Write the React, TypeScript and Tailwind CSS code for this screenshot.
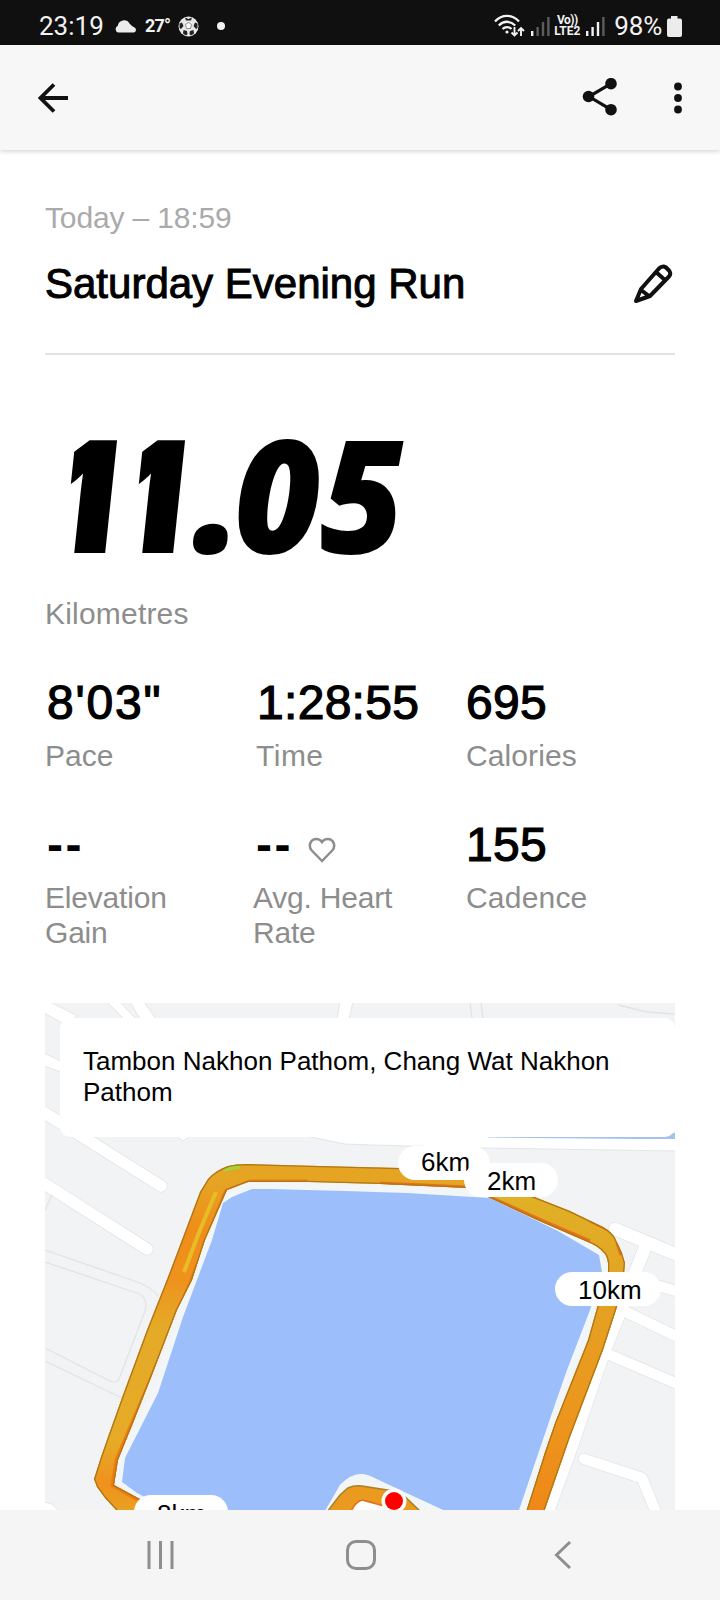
import type { ReactNode } from "react";

const sans = "font-['Liberation_Sans',Arial,sans-serif]";

const stats = [
  { label: "Pace", value: "8'03\"", valueClass: "pl-[2px] tracking-[1.8px]", labelClass: "" },
  { label: "Time", value: "1:28:55", valueClass: "pl-[2px] tracking-[0.3px]", labelClass: "pl-px tracking-[0.5px]" },
  { label: "Calories", value: "695", valueClass: "pl-px tracking-[0.3px]", labelClass: "pl-px tracking-[0.1px]" },
  { label: "Elevation Gain", value: "--", valueClass: "pl-[2px] font-bold tracking-[2.5px]", labelClass: "tracking-[-0.2px]" },
  { label: "Avg. Heart Rate", value: "--", heart: true, valueClass: "pl-px font-bold tracking-[2.5px]", labelClass: "-ml-[2px] tracking-[-0.2px]" },
  { label: "Cadence", value: "155", valueClass: "pl-px tracking-[0.3px]", labelClass: "pl-px tracking-[0.2px]" },
];

// outline of the recorded loop, outer edge first and then back along the inner one
const loop =
  "M118 1512 L105 1498 L97 1487 L94 1479 L101 1457 L108 1437 L123 1395 L147 1330 L168 1277 L182 1240 L200 1192 L208 1179 Q216 1170 228 1166 Q236 1164 247 1164 L320 1166 L400 1168 L470 1172 L537 1198 L570 1211 L603 1227 Q612 1232 615 1238 L622 1253 L625 1263 L624 1274 L617 1307 L603 1350 L570 1437 L544 1512 L526 1512 L545 1452 L555 1423 L588 1340 L597 1308 L608 1273 L608 1263 Q607 1255 603 1252 Q599 1247 590 1243 L537 1220 L488 1197 L467 1188 L380 1184 L308 1182 L248 1182 L227 1190 L205 1240 L192 1280 L177 1310 L152 1375 L133 1423 L118 1460 L114 1485 L138 1498 L170 1512 Z";

function SignalBars({ on }: { on: number }) {
  return (
    <svg width="19" height="20" viewBox="0 0 19 20">
      {[5, 9, 14, 19].map((h, i) => (
        <rect key={h} x={i * 5.4} y={20 - h} width="2.4" height={h} fill={i < on ? "#f2f2f2" : "#5c5c5c"} />
      ))}
    </svg>
  );
}

function StatusBar() {
  return (
    <div className="flex h-[45px] items-center bg-[#101010] pt-[7px] pr-[38px] pl-[39px] font-[Roboto,sans-serif] text-[#f2f2f2]">
      <span className="w-[76px] text-[26px] leading-none">23:19</span>
      <svg width="22" height="14" viewBox="0 0 22 14" fill="#ececec">
        <path d="M3.500 13.500A3.500 3.500 0 0 1 2.800 6.800 6.300 6.300 0 0 1 14.500 4.500Q16.500 7 19.500 8.500A2.700 2.700 0 0 1 19 13.500z" />
      </svg>
      <span className="ml-2 w-[33px] text-[18px] leading-none font-bold tracking-[-0.8px]">27°</span>
      <svg width="21" height="21" viewBox="0 0 21 21">
        <circle cx="10.500" cy="10.500" r="10" fill="#e9e9e9" />
        <path d="M7 1.500l3.500 1.500 3.500-1.500-1 3h-5zM1.500 7.500l2.500-1 1.500 3.500-2.500 3-1.500-1zM19.500 7.500l-2.500-1-1.500 3.500 2.500 3 1.500-1zM5 17.500l.5-3.500 3.500 1 .5 3-1.500 1.500zM16 17.500l-.5-3.500-3.500 1-.5 3 1.500 1.500z" fill="#222" />
        <path d="M7.500 8.500l3-2 3 2-1 4h-4z" fill="#fff" stroke="#777" strokeWidth="0.800" />
      </svg>
      <span className="ml-[18px] size-2 rounded-full bg-[#f2f2f2]" />
      <div className="ml-auto flex items-center">
        <svg width="31" height="24" viewBox="0 0 31 24" fill="none" stroke="#f2f2f2" strokeWidth="2.300">
          <path d="M1 7.500C8 0 18 0 25 7.500M4.800 11.500c5-5 11.400-5 16.400 0M8.500 15c2.500-2.600 6.500-2.600 9 0" />
          <circle cx="13" cy="18" r="1.600" fill="#f2f2f2" stroke="none" />
          <path d="M20.500 13v8M17.500 18.500l3 3 3-3M27 22v-8M24 17l3-3 3 3" strokeWidth="1.900" />
        </svg>
        <span className="ml-[6px] flex">
          <SignalBars on={1} />
        </span>
        <span className="mr-[5px] ml-[3px] w-7 text-center text-[12px] leading-[11px] font-bold">
          <span className="block tracking-[-0.5px]">Vo))</span>
          <span className="block">LTE2</span>
        </span>
        <SignalBars on={3} />
        <span className="ml-[9px] text-[26px] leading-none tracking-[-0.2px]">98%</span>
        <svg className="ml-[5px]" width="15" height="21" viewBox="0 0 15 21" fill="#ececec">
          <path d="M4 0h6.500v2.500H13a2 2 0 0 1 2 2V19a2 2 0 0 1-2 2H2a2 2 0 0 1-2-2V4.500a2 2 0 0 1 2-2h2z" />
        </svg>
      </div>
    </div>
  );
}

function Header() {
  return (
    <header className="flex h-[105px] items-center justify-between bg-[#f7f7f7] pr-[38px] pl-[38px] shadow-[0_1px_5px_rgba(0,0,0,0.2)]">
      <svg width="32" height="32" viewBox="0 0 32 32" fill="none" stroke="#111" strokeWidth="3.800">
        <path d="M30 16H3M16 2.500L2.500 16 16 29.500" />
      </svg>
      <div className="flex items-center gap-[56px]">
        <svg width="36" height="40" viewBox="0 1.3 36 40" fill="#111">
          <path d="M29 7L7 19.800 29 33" fill="none" stroke="#111" strokeWidth="3.200" />
          <circle cx="29" cy="7" r="5.800" />
          <circle cx="6.500" cy="19.800" r="5.800" />
          <circle cx="29" cy="33" r="5.800" />
        </svg>
        <svg width="8" height="32" viewBox="0 0 8 32" fill="#111">
          <circle cx="4" cy="4.500" r="3.900" />
          <circle cx="4" cy="16" r="3.900" />
          <circle cx="4" cy="27.500" r="3.900" />
        </svg>
      </div>
    </header>
  );
}

function Distance() {
  // the ones get a short flag, the other digits use the real italics
  return (
    <p className="mt-[57px] -ml-[6px] flex font-['Open_Sans',sans-serif] text-[158px] leading-[160px] font-extrabold text-black">
      <span className="w-[68px] -skew-x-6 [clip-path:inset(0_-20px_0_31px)]">1</span>
      <span className="w-[86px] -skew-x-6 [clip-path:inset(0_-20px_0_31px)]">1</span>
      <span className="w-[41px] origin-[0_141px] scale-[1.06] italic">.</span>
      <span className="w-[86px] origin-left scale-x-95 italic">0</span>
      <span className="w-[84px] origin-left scale-x-[0.92] italic">5</span>
    </p>
  );
}

function Pill({ className, children }: { className: string; children: ReactNode }) {
  return (
    <div className={`absolute h-[34px] rounded-full bg-white pl-[23px] text-[26px] leading-[31px] text-black ${className}`}>
      {children}
    </div>
  );
}

function RouteMap() {
  return (
    <section className="relative mt-[53px] h-[507px] overflow-hidden bg-[#f1f3f4]">
      <svg className="block" width="630" height="507" viewBox="45 1003 630 507">
        <defs>
          <linearGradient id="left" gradientUnits="userSpaceOnUse" x1="0" y1="1180" x2="0" y2="1510">
            <stop offset="0" stopColor="#e5a525" />
            <stop offset="0.15" stopColor="#f08d19" />
            <stop offset="0.3" stopColor="#ef921d" />
            <stop offset="0.45" stopColor="#e4ab28" />
            <stop offset="0.8" stopColor="#e6aa26" />
            <stop offset="0.92" stopColor="#ef911d" />
            <stop offset="1" stopColor="#e9a21f" />
          </linearGradient>
          <linearGradient id="right" gradientUnits="userSpaceOnUse" x1="0" y1="1200" x2="0" y2="1510">
            <stop offset="0" stopColor="#e0b026" />
            <stop offset="0.35" stopColor="#e5a022" />
            <stop offset="0.7" stopColor="#ec961d" />
            <stop offset="1" stopColor="#ef8818" />
          </linearGradient>
          <clipPath id="loop">
            <path d={loop} />
          </clipPath>
        </defs>

        {/* streets */}
        <g fill="#fff" stroke="#e3e5e6" strokeWidth="1">
          <path d="M44 999L78 1016 64 1024 44 1013z" />
          <path d="M107 1002h13l16 17h-12zM130 1002h14l12 17h-16z" />
          <path d="M340 1002h13l-4 17h-12z" />
          <path d="M44 1053l17 8v11l-17-6z" />
          <path d="M176 1136l7 5 7-5z" />
          <path d="M306 1136l39 8 28 1 112 3 191 3v-16z" />
          <path d="M44 1502l8 2 8 8H44z" />
        </g>
        <path d="M488 1136.500H660L664 1133H676V1139H640L488 1137.500z" fill="#a3c2f0" />
        {[
          ["#e3e5e6", 0],
          ["#ffffff", 1.5],
        ].map(([color, inset]) => (
          <g key={color} fill="none" stroke={color as string} strokeLinecap="round" strokeLinejoin="round">
            <path d="M40 1110L83 1137 161 1186M40 1181L147 1249" strokeWidth={13 - Number(inset)} />
            <path d="M615 1229L680 1256M644 1250L620 1312 604 1352 571 1448 546 1516" strokeWidth={14 - Number(inset)} />
            <path d="M655 1285L680 1292M624 1311L680 1338M610 1355L680 1385M584 1459L642 1478 657 1515" strokeWidth={12 - Number(inset)} />
          </g>
        ))}
        <g fill="none" stroke="#e1e4e5" strokeWidth="1.300">
          <path d="M470 1003L472 1018M481 1003L483 1018M618 1005L647 1012 675 1014M52 1195L45 1210" />
          <path d="M45 1250L140 1283Q152 1288 158 1296M45 1262L137 1293Q149 1298 145 1311L119 1379Q116 1384 110 1381L45 1348M45 1361L122 1398" />
        </g>

        {/* lake and the path around it */}
        <path
          d="M252 1189L270 1189 345 1191 407 1193 490 1198 558 1231 599 1255 602 1272 590 1310 567 1370 552 1413 517 1516 456 1516 370 1476Q355 1470 340 1485L322 1516H180L137 1493 122 1482 125 1458 158 1393 183 1317 212 1240 223 1203 232 1197z"
          fill="#9cbffb"
          stroke="#f3f6f7"
          strokeWidth="13"
          paintOrder="stroke"
          strokeLinejoin="round"
        />
        <path d="M326 1512L340 1485Q356 1468 372 1477L445 1512z" fill="#f3f6f7" />

        {/* recorded run, tinted by speed */}
        <path d={loop} fill="#e5a523" />
        <g clipPath="url(#loop)" fill="none">
          <path d="M90 1520V1200L215 1165 240 1175 200 1300 130 1490 160 1520z" fill="url(#left)" />
          <path d="M480 1160L640 1200V1300L560 1520H500L600 1260 480 1210z" fill="url(#right)" />
          <path d="M138 1499L113 1485 117 1460 152 1378 192 1280 226 1192 250 1182 308 1182" stroke="#f07c12" strokeWidth="5" />
          <path d="M184 1272L200 1230 216 1192" stroke="#e8bc27" strokeWidth="4" />
          <path d="M224 1169L240 1166" stroke="#a6d13a" strokeWidth="5" />
          <path d="M380 1183L467 1187M488 1196L537 1218 590 1241M590 1221L608 1230M617 1243L621 1255" stroke="#e8701a" strokeWidth="3" />
          <path d={loop} stroke="#b07718" strokeWidth="2.600" />
        </g>
        <path d="M327 1512L340 1495 348 1488Q354 1485 362 1486L400 1492 421 1512H386Q372 1499 361 1501 355 1503 351 1512z" fill="#ea9a1e" stroke="#a98224" strokeWidth="1.500" />
        <path d="M351 1512Q355 1502 362 1500L384 1506 388 1512z" fill="#fff" stroke="#e8701a" strokeWidth="1.500" />
        <circle cx="394" cy="1501" r="12.500" fill="#fff" />
        <circle cx="394" cy="1501" r="9" fill="#f00" />
      </svg>

      <div className="absolute top-[15px] left-[15px] h-[119px] w-[615px] rounded-[10px] bg-white pt-[28px] pr-10 pl-[23px] text-[26px] leading-[31px] text-black">
        Tambon Nakhon Pathom, Chang Wat Nakhon Pathom
      </div>
      <Pill className="top-[143px] left-[353px] w-[92px] pt-px">6km</Pill>
      <Pill className="top-[160px] left-[419px] w-[94px] pt-[3px]">2km</Pill>
      <Pill className="top-[269px] left-[510px] w-[106px] pt-[3px]">10km</Pill>
      <Pill className="top-[492px] left-[89px] w-[94px] pt-[4px]">8km</Pill>
    </section>
  );
}

function NavBar() {
  return (
    <nav className="flex h-[90px] items-center justify-between bg-[#f5f5f5] pr-[147px] pl-[146px] text-[#8e8e8e]">
      <svg width="29" height="30" viewBox="0 0 29 30" fill="none" stroke="currentColor" strokeWidth="3">
        <path d="M3 1v28M14.500 1v28M26 1v28" />
      </svg>
      <svg className="mr-[7px]" width="32" height="32" viewBox="0 0 32 32" fill="none" stroke="currentColor" strokeWidth="3">
        <rect x="2.500" y="2.500" width="27" height="27" rx="8.500" />
      </svg>
      <svg width="20" height="30" viewBox="0 0 20 30" fill="none" stroke="currentColor" strokeWidth="3">
        <path d="M17 2L3.500 15 17 28" />
      </svg>
    </nav>
  );
}

export default function App() {
  return (
    <div className={`flex h-[1600px] w-[720px] flex-col overflow-hidden bg-white ${sans}`}>
      <StatusBar />
      <Header />
      <main className="h-[1360px] overflow-hidden px-[45px] pt-[50px]">
        <p className="text-[30px] leading-9 tracking-[-0.15px] text-[#aaa]">Today – 18:59</p>
        <div className="mt-6 flex items-center justify-between">
          <h1 className="text-[42px] leading-[48px] text-black [-webkit-text-stroke:1px_#000]">Saturday Evening Run</h1>
          <svg width="42" height="42" viewBox="0 2 42 42" fill="none" stroke="#111" strokeWidth="4" strokeLinejoin="round">
            <path d="M3 40L8 28 26 7.500Q29.500 4 33 6.500L36 9.500Q38.500 12.500 36 15.500L17 35zM23 11l10 9M8 29l8 6" />
          </svg>
        </div>
        <div className="mt-[45px] h-0.5 bg-[#e3e3e3]" />

        <Distance />
        <p className="mt-6 text-[30px] leading-9 tracking-[0.2px] text-[#8d8d8d]">Kilometres</p>

        <div className="mt-[43px] grid grid-cols-3 gap-y-[44px]">
          {stats.map((s) => (
            <div key={s.label}>
              <div className="flex h-[56px] items-center gap-[15px] text-black">
                <span
                  className={`text-[48px] leading-[56px] ${s.valueClass} ${
                    s.value === "--" ? "" : "[-webkit-text-stroke:1.2px_#000]"
                  }`}
                >
                  {s.value}
                </span>
                {s.heart && (
                  <svg className="mt-[10px]" width="28" height="26" viewBox="0 0 28 26" fill="none" stroke="#8d8d8d" strokeWidth="2.500">
                    <path d="M14 24L3.800 13.500C-.5 8.500 3 2 8.200 2 11 2 13 3.500 14 5 15 3.500 17 2 19.800 2 25 2 28.500 8.500 24.200 13.500z" />
                  </svg>
                )}
              </div>
              <div className={`mt-[7px] w-[150px] text-[30px] leading-[35px] text-[#8d8d8d] ${s.labelClass}`}>{s.label}</div>
            </div>
          ))}
        </div>

        <RouteMap />
      </main>
      <NavBar />
    </div>
  );
}
